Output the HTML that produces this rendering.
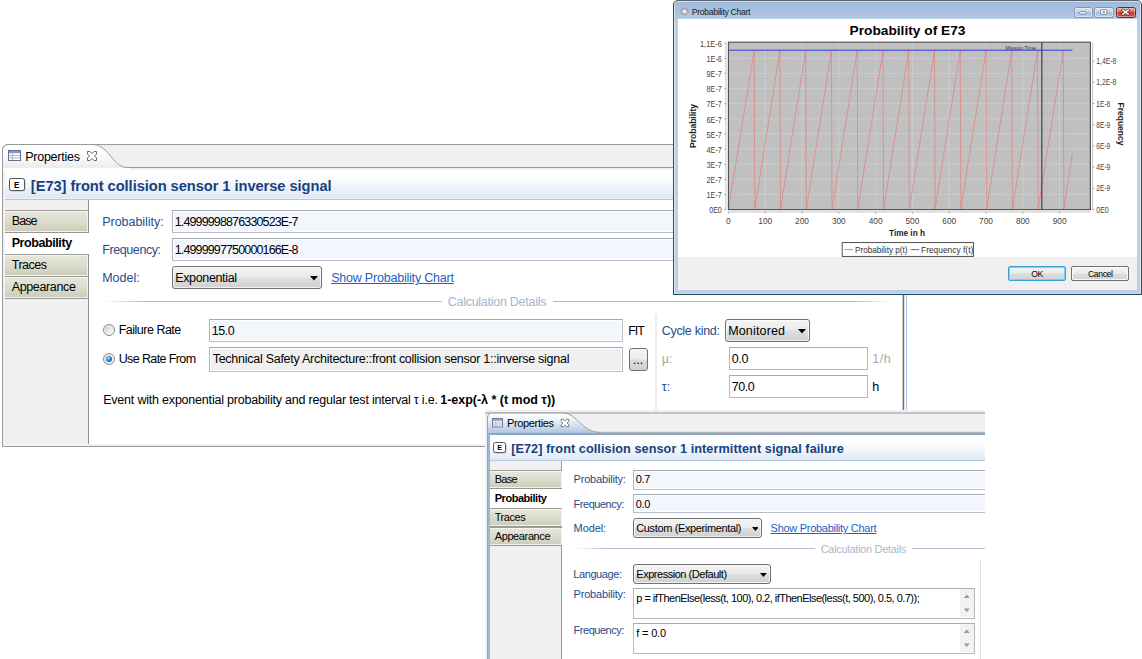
<!DOCTYPE html>
<html><head><meta charset="utf-8"><title>Properties</title>
<style>
html,body{margin:0;padding:0;background:#fff;}
body{width:1142px;height:659px;position:relative;overflow:hidden;font-family:"Liberation Sans",sans-serif;}
div,svg,span.t{position:absolute;}
span.t{white-space:pre;line-height:1;}
#p1,#p2,#cw{left:0;top:0;width:1142px;height:659px;}
#p1{clip-path:polygon(0 0,907px 0,907px 659px,0 659px);}
#p2{clip-path:polygon(485px 410px,985px 410px,985px 659px,485px 659px);}
</style></head><body>
<div id="p1">
<div style="left:2px;top:144px;width:904px;height:303px;background:#f0f0f0;border:1px solid #9a9a9a;border-radius:6px 0 0 0;box-sizing:border-box"></div>
<svg style="left:2px;top:144px" width="904" height="27" viewBox="0 0 904 27">
<defs><linearGradient id="tg1" x1="0" y1="0" x2="0" y2="1"><stop offset="0" stop-color="#fff"/><stop offset="0.35" stop-color="#fdfdfd"/><stop offset="0.86" stop-color="#ececec"/><stop offset="0.9" stop-color="#fff"/></linearGradient></defs>
<path d="M1 27 V6 Q1 1 6 1 H91 C99 0.5 104 7 108.5 12 C113 17 117 23.5 126 23.5 H128 V27 Z" fill="url(#tg1)"/>
<path d="M0.5 27 V6.5 Q0.5 0.5 6.5 0.5 H91 C99 0.5 104 7 108.5 12 C113 17 117 23.5 126 23.5 H904" fill="none" stroke="#9a9a9a" stroke-width="1"/>
<path d="M6 0.5 H904" fill="none" stroke="#9a9a9a" stroke-width="1"/>
</svg>
<svg style="left:8px;top:150px" width="13" height="11" viewBox="0 0 13 11">
<rect x="0.5" y="0.5" width="12" height="10" fill="#fff" stroke="#61708f"/>
<rect x="1" y="1" width="11" height="2.2" fill="#8797bd"/>
<path d="M1 5.5H12M1 7.9H12M4.4 3V10" stroke="#a3aec8" stroke-width="0.9" fill="none"/>
</svg>
<span class="t" style="left:25.19px;top:150.72px;font-size:12.5px;color:#000;letter-spacing:-0.247px;">Properties</span>
<svg style="left:86px;top:150px" width="12" height="12" viewBox="0 0 12 12">
<path d="M1.5 1.5h2.5l2 2 2-2h2.5v2.5l-2 2 2 2v2.5h-2.5l-2-2-2 2h-2.5v-2.5l2-2-2-2z" fill="#fff" stroke="#5a5a5a" stroke-width="0.9"/></svg>
<div style="left:5px;top:170px;width:901px;height:30px;background:linear-gradient(#ffffff 0%,#fcfdff 28%,#e1e8f4 96%,#f4f7fb 100%);border-bottom:1px solid #b0c6e4;box-sizing:border-box"></div>
<div style="left:9px;top:178px;width:16px;height:13px;border:1px solid #555;border-radius:2.5px;background:#fff;box-sizing:border-box;box-shadow:0.5px 0.5px 0 #bbb"></div>
<svg style="left:9px;top:178px" width="16" height="13" viewBox="0 0 16 13"><text x="5.1" y="9.9" font-family="Liberation Sans, sans-serif" font-weight="700" font-size="8.28" textLength="5.4" lengthAdjust="spacingAndGlyphs" fill="#000">E</text></svg>
<span class="t" style="left:30.85px;top:178.88px;font-size:14.67px;color:#17427f;font-weight:700;letter-spacing:-0.051px;">[E73] front collision sensor 1 inverse signal</span>
<div style="left:5px;top:200px;width:901px;height:244px;background:#fff"></div>
<div style="left:3px;top:200px;width:85px;height:245px;background:#f0f0f0"></div>
<div style="left:88px;top:200px;width:1px;height:244px;background:#8f8f8f"></div>
<div style="left:5px;top:210px;width:83px;height:23px;background:linear-gradient(#e7e7db,#dcdccd 50%,#cbcbb9);border-top:1px solid #9c9c9c;border-bottom:1px solid #979797;box-sizing:border-box;box-shadow:inset 0 1px 0 #f6f6ee,inset 0 -1px 0 #f2f2ea,inset -1px 0 0 #f2f2ea"></div>
<span class="t" style="left:11.69px;top:215.02px;font-size:12.5px;color:#000;letter-spacing:-0.898px;">Base</span>
<div style="left:5px;top:233px;width:84px;height:21px;background:#fff"></div>
<span class="t" style="left:11.69px;top:236.52px;font-size:12.5px;color:#000;font-weight:700;letter-spacing:-0.418px;">Probability</span>
<div style="left:5px;top:254px;width:83px;height:23px;background:linear-gradient(#e7e7db,#dcdccd 50%,#cbcbb9);border-top:1px solid #9c9c9c;border-bottom:1px solid #979797;box-sizing:border-box;box-shadow:inset 0 1px 0 #f6f6ee,inset 0 -1px 0 #f2f2ea,inset -1px 0 0 #f2f2ea"></div>
<span class="t" style="left:11.69px;top:258.92px;font-size:12.5px;color:#000;letter-spacing:-0.473px;">Traces</span>
<div style="left:5px;top:276px;width:83px;height:23px;background:linear-gradient(#e7e7db,#dcdccd 50%,#cbcbb9);border-top:1px solid #9c9c9c;border-bottom:1px solid #979797;box-sizing:border-box;box-shadow:inset 0 1px 0 #f6f6ee,inset 0 -1px 0 #f2f2ea,inset -1px 0 0 #f2f2ea"></div>
<span class="t" style="left:11.69px;top:281.02px;font-size:12.5px;color:#000;letter-spacing:-0.361px;">Appearance</span>
<div style="left:172px;top:210px;width:740px;height:23px;background:#f3f7fd;border:1px solid #b9bec8;border-top-color:#a3a8b2;border-left-color:#aeb3bd;box-sizing:border-box;box-shadow:inset 0 0 0 1px #fff"></div>
<span class="t" style="left:174.69px;top:216.22px;font-size:12.5px;color:#000;letter-spacing:-0.862px;">1.4999998876330523E-7</span>
<div style="left:172px;top:238px;width:740px;height:23px;background:#f3f7fd;border:1px solid #b9bec8;border-top-color:#a3a8b2;border-left-color:#aeb3bd;box-sizing:border-box;box-shadow:inset 0 0 0 1px #fff"></div>
<span class="t" style="left:174.69px;top:244.22px;font-size:12.5px;color:#000;letter-spacing:-0.862px;">1.4999997750000166E-8</span>
<span class="t" style="left:102.19px;top:216.22px;font-size:12.5px;color:#1f4b8c;letter-spacing:-0.028px;">Probability:</span>
<span class="t" style="left:102.19px;top:244.22px;font-size:12.5px;color:#1f4b8c;letter-spacing:-0.403px;">Frequency:</span>
<span class="t" style="left:102.19px;top:272.22px;font-size:12.5px;color:#1f4b8c;letter-spacing:-0.003px;">Model:</span>
<div style="left:172px;top:266px;width:150px;height:23px;border:1px solid #707070;border-radius:3px;background:linear-gradient(#f3f3f3,#ebebeb 48%,#dedede 52%,#d0d0d0);box-sizing:border-box;box-shadow:inset 0 0 0 1px rgba(255,255,255,.7)"></div>
<span class="t" style="left:175.19px;top:272.22px;font-size:12.5px;color:#000;letter-spacing:-0.348px;">Exponential</span>
<svg style="left:309.5px;top:276px" width="8" height="5" viewBox="0 0 8 5"><path d="M0 0H8L4 4.6Z" fill="#000"/></svg>
<span class="t" style="left:331.19px;top:272.22px;font-size:12.5px;color:#1a5fc4;letter-spacing:-0.211px;text-decoration:underline;">Show Probability Chart</span>
<div style="left:104px;top:301px;width:338px;height:1px;background:linear-gradient(90deg,#fff,#a9bad2 12%,#a9bad2)"></div>
<div style="left:553px;top:301px;width:340px;height:1px;background:linear-gradient(90deg,#a9bad2,#a9bad2 88%,#fff)"></div>
<span class="t" style="left:447.69px;top:295.72px;font-size:12.5px;color:#a3b6cc;letter-spacing:-0.264px;">Calculation Details</span>
<div style="left:103px;top:324px;width:12px;height:12px;border:1px solid #8a8b8c;border-radius:50%;background:linear-gradient(135deg,#c6c9cc 10%,#e9eaeb 50%,#fdfdfd 85%);box-sizing:border-box;box-shadow:inset 0 0 0 1.2px #eeeeee"></div>
<span class="t" style="left:118.69px;top:324.22px;font-size:12.5px;color:#000;letter-spacing:-0.499px;">Failure Rate</span>
<div style="left:209px;top:319px;width:414px;height:23px;background:#f3f7fd;border:1px solid #b9bec8;border-top-color:#a3a8b2;border-left-color:#aeb3bd;box-sizing:border-box;box-shadow:inset 0 0 0 1px #fff"></div>
<span class="t" style="left:211.79px;top:325.22px;font-size:12.5px;color:#000;letter-spacing:-0.457px;">15.0</span>
<span class="t" style="left:628.19px;top:324.72px;font-size:12.5px;color:#000;letter-spacing:-1.081px;">FIT</span>
<div style="left:103px;top:353px;width:12px;height:12px;border:1px solid #8a8b8c;border-radius:50%;background:linear-gradient(135deg,#c6c9cc 10%,#e9eaeb 50%,#fdfdfd 85%);box-sizing:border-box;box-shadow:inset 0 0 0 1.2px #eeeeee"><i style="position:absolute;left:2px;top:2px;width:6px;height:6px;border-radius:50%;background:radial-gradient(circle at 38% 35%,#9fe4fb 0%,#38a1dc 35%,#145aa6 70%,#0b3a78 100%)"></i></div>
<span class="t" style="left:118.69px;top:352.82px;font-size:12.5px;color:#000;letter-spacing:-0.611px;">Use Rate From</span>
<div style="left:209px;top:347px;width:414px;height:25px;background:#f0f0f0;border:1px solid #b9bec8;border-top-color:#a3a8b2;border-left-color:#aeb3bd;box-sizing:border-box;box-shadow:inset 0 0 0 1px #fff"></div>
<span class="t" style="left:212.69px;top:352.82px;font-size:12.5px;color:#000;letter-spacing:-0.263px;">Technical Safety Architecture::front collision sensor 1::inverse signal</span>
<div style="left:629px;top:348px;width:19px;height:23px;border:1px solid #707070;border-radius:3px;background:linear-gradient(#f4f4f4,#ececec 48%,#dddddd 52%,#cfcfcf);box-sizing:border-box"></div>
<span class="t" style="left:632.69px;top:353.82px;font-size:12.5px;color:#000;letter-spacing:0.027px;">...</span>
<span class="t" style="left:103.19px;top:394.22px;font-size:12.5px;color:#000;letter-spacing:-0.204px;">Event with exponential probability and regular test interval τ i.e.</span>
<span class="t" style="left:440.19px;top:394.22px;font-size:12.5px;color:#000;font-weight:700;letter-spacing:-0.014px;">1-exp(-λ * (t mod τ))</span>
<div style="left:654.5px;top:314px;width:2.3px;height:131px;background:#ececec"></div>
<span class="t" style="left:661.69px;top:324.72px;font-size:12.5px;color:#1f4b8c;letter-spacing:-0.285px;">Cycle kind:</span>
<div style="left:725px;top:319px;width:85px;height:23px;border:1px solid #707070;border-radius:3px;background:linear-gradient(#f3f3f3,#ebebeb 48%,#dedede 52%,#d0d0d0);box-sizing:border-box;box-shadow:inset 0 0 0 1px rgba(255,255,255,.7)"></div>
<span class="t" style="left:728.19px;top:324.72px;font-size:12.5px;color:#000;letter-spacing:0.157px;">Monitored</span>
<svg style="left:797.5px;top:329px" width="8" height="5" viewBox="0 0 8 5"><path d="M0 0H8L4 4.6Z" fill="#000"/></svg>
<span class="t" style="left:661.69px;top:353.22px;font-size:12.5px;color:#a8a8a8;">μ:</span>
<div style="left:729px;top:347px;width:139px;height:23px;background:#fff;border:1px solid #b6b8bd;border-top-color:#a9abb1;box-sizing:border-box;box-shadow:inset 0 0 0 1px #fff"></div>
<span class="t" style="left:731.69px;top:352.72px;font-size:12.5px;color:#000;letter-spacing:-0.292px;">0.0</span>
<span class="t" style="left:872.19px;top:353.22px;font-size:12.5px;color:#a8a8a8;letter-spacing:0.541px;">1/h</span>
<span class="t" style="left:661.69px;top:380.72px;font-size:12.5px;color:#1f4b8c;">τ:</span>
<div style="left:729px;top:375px;width:139px;height:23px;background:#fff;border:1px solid #b6b8bd;border-top-color:#a9abb1;box-sizing:border-box;box-shadow:inset 0 0 0 1px #fff"></div>
<span class="t" style="left:731.69px;top:380.72px;font-size:12.5px;color:#000;letter-spacing:-0.457px;">70.0</span>
<span class="t" style="left:872.19px;top:380.72px;font-size:12.5px;color:#000;">h</span>
<div style="left:902px;top:200px;width:1px;height:246px;background:#cfcfcf"></div>
<div style="left:903px;top:200px;width:1px;height:246px;background:#6e6e6e"></div>
<div style="left:904px;top:200px;width:1px;height:246px;background:#e4e4e4"></div>
<div style="left:906px;top:200px;width:1px;height:246px;background:#a9c4e6"></div>
</div>
<div id="p2">
<div style="left:485px;top:410px;width:500px;height:260px;background:#f0f0f0"></div>
<div style="left:485px;top:412px;width:500px;height:2px;background:#c3c3c3"></div>
<svg style="left:485px;top:410px" width="500" height="26" viewBox="0 0 500 26">
<defs><linearGradient id="tg" x1="0" y1="0" x2="0" y2="1"><stop offset="0" stop-color="#ffffff"/><stop offset="0.25" stop-color="#f1f5fa"/><stop offset="1" stop-color="#a3bddc"/></linearGradient></defs>
<path d="M2.5 26 V8 Q2.5 3 7.5 3 H78 C93 3 96 22.5 115 22.5 H500 V26 Z" fill="url(#tg)"/>
<path d="M2.5 26 V8 Q2.5 3 7.5 3 H78 C93 3 96 22.5 115 22.5" fill="none" stroke="#9c9c9c" stroke-width="1"/>
<path d="M113 22.3 H500" stroke="#b0aca6" stroke-width="1"/>
<path d="M3 24 H500" stroke="#86a5cf" stroke-width="2"/>
</svg>
<div style="left:488px;top:434px;width:2px;height:236px;background:#9db7d8"></div>
<div style="left:487px;top:420px;width:1px;height:250px;background:#a0a0a0"></div>
<svg style="left:492px;top:418px" width="11" height="10" viewBox="0 0 11 10">
<rect x="0.5" y="0.5" width="10" height="8.5" fill="#f4f6fb" stroke="#6f7d98"/>
<rect x="1" y="1" width="9" height="2" fill="#9aabc9"/>
<path d="M1 5H10M1 7H10M3.8 3V9" stroke="#aab4ca" stroke-width="0.8" fill="none"/></svg>
<span class="t" style="left:506.89px;top:417.99px;font-size:11px;color:#000;letter-spacing:-0.331px;">Properties</span>
<svg style="left:559.5px;top:418.3px" width="10" height="10" viewBox="0 0 12 12">
<path d="M1.5 1.5h2.5l2 2 2-2h2.5v2.5l-2 2 2 2v2.5h-2.5l-2-2-2 2h-2.5v-2.5l2-2-2-2z" fill="#fff" stroke="#666" stroke-width="1"/></svg>
<div style="left:490px;top:435px;width:495px;height:25.5px;background:linear-gradient(#ffffff 0%,#fcfdff 35%,#e0e8f4 100%);border-bottom:1px solid #b4c9e4;box-sizing:border-box"></div>
<div style="left:492.7px;top:442px;width:13.8px;height:11px;border:1px solid #555;border-radius:2.5px;background:#fff;box-sizing:border-box;box-shadow:0.5px 0.5px 0 #bbb"></div>
<svg style="left:492.7px;top:442px" width="13.8" height="11" viewBox="0 0 13.8 11"><text x="4.36" y="7.9" font-family="Liberation Sans, sans-serif" font-weight="700" font-size="7.176" textLength="4.68" lengthAdjust="spacingAndGlyphs" fill="#000">E</text></svg>
<span class="t" style="left:511.17px;top:442.85px;font-size:12.7px;color:#17427f;font-weight:700;letter-spacing:0.060px;">[E72] front collision sensor 1 intermittent signal failure</span>
<div style="left:490px;top:460.5px;width:495px;height:200px;background:#fff"></div>
<div style="left:490px;top:460.5px;width:71.5px;height:200px;background:#f0f0f0"></div>
<div style="left:561.3px;top:460.5px;width:1px;height:200px;background:#9a9a9a"></div>
<div style="left:490px;top:470px;width:71.5px;height:19px;background:linear-gradient(#e7e7db,#dcdccd 50%,#cbcbb9);border-top:1px solid #9c9c9c;border-bottom:1px solid #979797;box-sizing:border-box;box-shadow:inset 0 1px 0 #f6f6ee,inset 0 -1px 0 #f2f2ea,inset -1px 0 0 #f2f2ea"></div>
<span class="t" style="left:494.69px;top:474.09px;font-size:11px;color:#000;letter-spacing:-0.738px;">Base</span>
<div style="left:490px;top:489px;width:72.5px;height:19px;background:#fff"></div>
<span class="t" style="left:494.69px;top:492.79px;font-size:11px;color:#000;font-weight:700;letter-spacing:-0.457px;">Probability</span>
<div style="left:490px;top:508px;width:71.5px;height:19px;background:linear-gradient(#e7e7db,#dcdccd 50%,#cbcbb9);border-top:1px solid #9c9c9c;border-bottom:1px solid #979797;box-sizing:border-box;box-shadow:inset 0 1px 0 #f6f6ee,inset 0 -1px 0 #f2f2ea,inset -1px 0 0 #f2f2ea"></div>
<span class="t" style="left:494.69px;top:511.69px;font-size:11px;color:#000;letter-spacing:-0.432px;">Traces</span>
<div style="left:490px;top:527px;width:71.5px;height:19px;background:linear-gradient(#e7e7db,#dcdccd 50%,#cbcbb9);border-top:1px solid #9c9c9c;border-bottom:1px solid #979797;box-sizing:border-box;box-shadow:inset 0 1px 0 #f6f6ee,inset 0 -1px 0 #f2f2ea,inset -1px 0 0 #f2f2ea"></div>
<span class="t" style="left:494.69px;top:530.69px;font-size:11px;color:#000;letter-spacing:-0.380px;">Appearance</span>
<div style="left:633px;top:469.5px;width:360px;height:20px;background:#f3f7fd;border:1px solid #b9bec8;border-top-color:#a3a8b2;border-left-color:#aeb3bd;box-sizing:border-box;box-shadow:inset 0 0 0 1px #fff"></div>
<span class="t" style="left:635.78px;top:474.49px;font-size:11px;color:#000;letter-spacing:-0.324px;">0.7</span>
<div style="left:633px;top:494.2px;width:360px;height:19.3px;background:#f3f7fd;border:1px solid #b9bec8;border-top-color:#a3a8b2;border-left-color:#aeb3bd;box-sizing:border-box;box-shadow:inset 0 0 0 1px #fff"></div>
<span class="t" style="left:635.78px;top:498.79px;font-size:11px;color:#000;letter-spacing:-0.324px;">0.0</span>
<span class="t" style="left:573.58px;top:474.49px;font-size:11px;color:#1f4b8c;letter-spacing:-0.191px;">Probability:</span>
<span class="t" style="left:573.58px;top:498.89px;font-size:11px;color:#1f4b8c;letter-spacing:-0.471px;">Frequency:</span>
<span class="t" style="left:573.58px;top:522.79px;font-size:11px;color:#1f4b8c;letter-spacing:-0.099px;">Model:</span>
<div style="left:633px;top:518.3px;width:129.3px;height:19.3px;border:1px solid #707070;border-radius:3px;background:linear-gradient(#f3f3f3,#ebebeb 48%,#dedede 52%,#d0d0d0);box-sizing:border-box;box-shadow:inset 0 0 0 1px rgba(255,255,255,.7)"></div>
<span class="t" style="left:636.28px;top:523.49px;font-size:11px;color:#000;letter-spacing:-0.365px;">Custom (Experimental)</span>
<svg style="left:751.675px;top:526.675px" width="6.8" height="4.25" viewBox="0 0 8 5"><path d="M0 0H8L4 4.6Z" fill="#000"/></svg>
<span class="t" style="left:770.58px;top:523.49px;font-size:11px;color:#1a5fc4;letter-spacing:-0.280px;text-decoration:underline;">Show Probability Chart</span>
<div style="left:575px;top:548.3px;width:240px;height:1px;background:linear-gradient(90deg,#fff,#b3c2d6 12%,#b3c2d6)"></div>
<div style="left:912px;top:548.3px;width:73px;height:1px;background:#b3c2d6"></div>
<span class="t" style="left:820.68px;top:543.99px;font-size:11px;color:#a9bacd;letter-spacing:-0.304px;">Calculation Details</span>
<span class="t" style="left:573.28px;top:569.09px;font-size:11px;color:#1f4b8c;letter-spacing:-0.409px;">Language:</span>
<div style="left:633px;top:564px;width:138px;height:19.6px;border:1px solid #707070;border-radius:3px;background:linear-gradient(#f3f3f3,#ebebeb 48%,#dedede 52%,#d0d0d0);box-sizing:border-box;box-shadow:inset 0 0 0 1px rgba(255,255,255,.7)"></div>
<span class="t" style="left:636.28px;top:569.09px;font-size:11px;color:#000;letter-spacing:-0.467px;">Expression (Default)</span>
<svg style="left:760.375px;top:572.525px" width="6.8" height="4.25" viewBox="0 0 8 5"><path d="M0 0H8L4 4.6Z" fill="#000"/></svg>
<span class="t" style="left:573.58px;top:589.49px;font-size:11px;color:#1f4b8c;letter-spacing:-0.191px;">Probability:</span>
<div style="left:633px;top:588.4px;width:342px;height:30.6px;background:#fff;border:1px solid #b6b8bd;border-top-color:#a9abb1;box-sizing:border-box;box-shadow:inset 0 0 0 1px #fff"></div>
<span class="t" style="left:636.28px;top:593.49px;font-size:11px;color:#000;letter-spacing:-0.522px;">p = ifThenElse(less(t, 100), 0.2, ifThenElse(less(t, 500), 0.5, 0.7));</span>
<div style="left:960.4px;top:589.4px;width:13.6px;height:28px;background:#f2f2f2"></div>
<svg style="left:960.4px;top:589.4px" width="13.6" height="28" viewBox="0 0 13.6 28"><path d="M3.8 9 l3 -3.4 l3 3.4z M3.8 19.5 l3 3.4 l3 -3.4z" fill="#9a9a9a"/></svg>
<span class="t" style="left:573.58px;top:624.69px;font-size:11px;color:#1f4b8c;letter-spacing:-0.471px;">Frequency:</span>
<div style="left:633px;top:623.4px;width:342px;height:30.4px;background:#fff;border:1px solid #b6b8bd;border-top-color:#a9abb1;box-sizing:border-box;box-shadow:inset 0 0 0 1px #fff"></div>
<span class="t" style="left:636.28px;top:627.89px;font-size:11px;color:#000;letter-spacing:-0.181px;">f = 0.0</span>
<div style="left:960.4px;top:624.4px;width:13.6px;height:28px;background:#f2f2f2"></div>
<svg style="left:960.4px;top:624.4px" width="13.6" height="28" viewBox="0 0 13.6 28"><path d="M3.8 9 l3 -3.4 l3 3.4z M3.8 19.5 l3 3.4 l3 -3.4z" fill="#9a9a9a"/></svg>
<div style="left:980px;top:559.5px;width:1.3px;height:110px;background:#e2e2e2"></div>
</div>
<div id="cw">
<div style="left:673px;top:0px;width:469px;height:295px;box-sizing:border-box;border:1px solid #3f454c;border-top-color:#5d646d;border-bottom-color:#1d4a55;border-radius:5px 5px 0 0;background:linear-gradient(#9ab6d8 0px,#a3bedd 5px,#a9c2e0 11px,#b7cde8 19px,#bad0ea 40px,#b9cfea 100%);box-shadow:inset 0 0 0 1px rgba(255,255,255,.55)"></div>
<div style="left:674px;top:293px;width:467px;height:1px;background:#aee6fa"></div>
<div style="left:678px;top:19px;width:459px;height:237.5px;background:#fff"></div>
<div style="left:678px;top:256.5px;width:459px;height:33.5px;background:#f0f0f0"></div>
<svg style="left:680px;top:7px" width="9" height="9" viewBox="0 0 9 9"><circle cx="4.5" cy="4.5" r="3.1" fill="none" stroke="#9a9a9a" stroke-width="2" stroke-dasharray="1.4 1.03"/><circle cx="4.5" cy="4.5" r="2.6" fill="#dedede" stroke="#a4a4a4" stroke-width="0.8"/><circle cx="4.5" cy="4.5" r="1" fill="#fff"/></svg>
<span class="t" style="left:691.83px;top:7.74px;font-size:8.7px;color:#1a1a1a;letter-spacing:-0.357px;">Probability Chart</span>
<div style="left:1073.5px;top:6.5px;width:19px;height:11px;box-sizing:border-box;border:1px solid #8094ae;border-radius:2.5px;background:linear-gradient(#d3dff0,#c3d3e8 45%,#abc1de 50%,#b9cde6);box-shadow:inset 0 0 0 1px rgba(255,255,255,.5)"></div>
<div style="left:1094px;top:6.5px;width:20px;height:11px;box-sizing:border-box;border:1px solid #8094ae;border-radius:2.5px;background:linear-gradient(#d3dff0,#c3d3e8 45%,#abc1de 50%,#b9cde6);box-shadow:inset 0 0 0 1px rgba(255,255,255,.5)"></div>
<div style="left:1115.5px;top:6.5px;width:20.5px;height:11px;box-sizing:border-box;border:1px solid #6b2a28;border-radius:2.5px;background:linear-gradient(#e5a79a,#d56d5e 45%,#c03a2c 50%,#d0604b);box-shadow:inset 0 0 0 1px rgba(255,255,255,.35)"></div>
<svg style="left:1073px;top:6px" width="64" height="12" viewBox="0 0 64 12"><rect x="6.5" y="5.6" width="6.4" height="2.4" rx="1" fill="#fff" stroke="#5b6675" stroke-width="0.7"/><rect x="27.6" y="3.6" width="6.2" height="4.6" rx="1" fill="#fff" stroke="#5b6675" stroke-width="0.7"/><rect x="29.6" y="5.3" width="2.3" height="1.3" fill="#5b6675"/><path d="M49.9 4.2 L55.1 8.2 M55.1 4.2 L49.9 8.2" stroke="#5a2320" stroke-width="2.9" stroke-linecap="square"/><path d="M49.9 4.2 L55.1 8.2 M55.1 4.2 L49.9 8.2" stroke="#fff" stroke-width="1.6" stroke-linecap="square"/></svg>
<svg style="left:0;top:0" width="1142" height="300" viewBox="0 0 1142 300" font-family="Liberation Sans, sans-serif">
<rect x="728.4" y="42.2" width="362" height="167.4" fill="#c0c0c0"/>
<path d="M765.20 42.2 V209.6 M802.00 42.2 V209.6 M838.80 42.2 V209.6 M875.60 42.2 V209.6 M912.40 42.2 V209.6 M949.20 42.2 V209.6 M986.00 42.2 V209.6 M1022.80 42.2 V209.6 M1059.60 42.2 V209.6 M728.4 194.47 H1090.4 M728.4 179.34 H1090.4 M728.4 164.21 H1090.4 M728.4 149.08 H1090.4 M728.4 133.95 H1090.4 M728.4 118.82 H1090.4 M728.4 103.69 H1090.4 M728.4 88.56 H1090.4 M728.4 73.43 H1090.4 M728.4 58.30 H1090.4" stroke="#fff" stroke-opacity="0.62" stroke-width="0.6" stroke-dasharray="1.3 1.3" fill="none"/>
<polyline points="728.40,209.60 754.16,50.73 754.75,209.30 779.92,50.73 780.51,209.30 805.68,50.73 806.27,209.30 831.44,50.73 832.03,209.30 857.20,50.73 857.79,209.30 882.96,50.73 883.55,209.30 908.72,50.73 909.31,209.30 934.48,50.73 935.07,209.30 960.24,50.73 960.83,209.30 986.00,50.73 986.59,209.30 1011.76,50.73 1012.35,209.30 1037.52,50.73 1038.11,209.30 1063.28,50.73 1063.87,209.30 1072.48,152.86" fill="none" stroke="#f06a6a" stroke-opacity="0.8" stroke-width="0.7" stroke-linejoin="round"/>
<path d="M728.4 50.20 H1072.48" stroke="#6262dc" stroke-width="1.6" fill="none"/>
<path d="M1041.80 42.2 V209.6" stroke="#4a4a4a" stroke-width="1.3" fill="none"/>
<text x="1036" y="50" font-size="6" text-anchor="end" fill="#333" textLength="30.4" lengthAdjust="spacingAndGlyphs">Mission Time</text>
<rect x="728.4" y="42.2" width="362" height="167.4" fill="none" stroke="#4d4d4d" stroke-width="1.1"/>
<path d="M725.9 42.2 V209.6 M1092.7 42.2 V209.6 M728.4 211.9 H1090.4" stroke="#b8b8b8" stroke-width="0.8" fill="none"/>
<text x="709.20" y="213.40" font-size="8.3" fill="#444" textLength="12.6" lengthAdjust="spacingAndGlyphs">0E0</text>
<text x="706.60" y="198.27" font-size="8.3" fill="#444" textLength="15.2" lengthAdjust="spacingAndGlyphs">1E-7</text>
<text x="706.60" y="183.14" font-size="8.3" fill="#444" textLength="15.2" lengthAdjust="spacingAndGlyphs">2E-7</text>
<text x="706.60" y="168.01" font-size="8.3" fill="#444" textLength="15.2" lengthAdjust="spacingAndGlyphs">3E-7</text>
<text x="706.60" y="152.88" font-size="8.3" fill="#444" textLength="15.2" lengthAdjust="spacingAndGlyphs">4E-7</text>
<text x="706.60" y="137.75" font-size="8.3" fill="#444" textLength="15.2" lengthAdjust="spacingAndGlyphs">5E-7</text>
<text x="706.60" y="122.62" font-size="8.3" fill="#444" textLength="15.2" lengthAdjust="spacingAndGlyphs">6E-7</text>
<text x="706.60" y="107.49" font-size="8.3" fill="#444" textLength="15.2" lengthAdjust="spacingAndGlyphs">7E-7</text>
<text x="706.60" y="92.36" font-size="8.3" fill="#444" textLength="15.2" lengthAdjust="spacingAndGlyphs">8E-7</text>
<text x="706.60" y="77.23" font-size="8.3" fill="#444" textLength="15.2" lengthAdjust="spacingAndGlyphs">9E-7</text>
<text x="706.60" y="62.10" font-size="8.3" fill="#444" textLength="15.2" lengthAdjust="spacingAndGlyphs">1E-6</text>
<text x="700.00" y="46.97" font-size="8.3" fill="#444" textLength="21.8" lengthAdjust="spacingAndGlyphs">1,1E-6</text>
<text x="1096.3" y="212.60" font-size="8.3" fill="#444" textLength="12.4" lengthAdjust="spacingAndGlyphs">0E0</text>
<text x="1096.3" y="191.40" font-size="8.3" fill="#444" textLength="14" lengthAdjust="spacingAndGlyphs">2E-9</text>
<text x="1096.3" y="170.20" font-size="8.3" fill="#444" textLength="14" lengthAdjust="spacingAndGlyphs">4E-9</text>
<text x="1096.3" y="149.00" font-size="8.3" fill="#444" textLength="14" lengthAdjust="spacingAndGlyphs">6E-9</text>
<text x="1096.3" y="127.80" font-size="8.3" fill="#444" textLength="14" lengthAdjust="spacingAndGlyphs">8E-9</text>
<text x="1096.3" y="106.60" font-size="8.3" fill="#444" textLength="14" lengthAdjust="spacingAndGlyphs">1E-8</text>
<text x="1096.3" y="85.40" font-size="8.3" fill="#444" textLength="20" lengthAdjust="spacingAndGlyphs">1,2E-8</text>
<text x="1096.3" y="64.20" font-size="8.3" fill="#444" textLength="20" lengthAdjust="spacingAndGlyphs">1,4E-8</text>
<text x="728.40" y="224.2" font-size="8.3" text-anchor="middle" fill="#444">0</text>
<text x="765.20" y="224.2" font-size="8.3" text-anchor="middle" fill="#444">100</text>
<text x="802.00" y="224.2" font-size="8.3" text-anchor="middle" fill="#444">200</text>
<text x="838.80" y="224.2" font-size="8.3" text-anchor="middle" fill="#444">300</text>
<text x="875.60" y="224.2" font-size="8.3" text-anchor="middle" fill="#444">400</text>
<text x="912.40" y="224.2" font-size="8.3" text-anchor="middle" fill="#444">500</text>
<text x="949.20" y="224.2" font-size="8.3" text-anchor="middle" fill="#444">600</text>
<text x="986.00" y="224.2" font-size="8.3" text-anchor="middle" fill="#444">700</text>
<text x="1022.80" y="224.2" font-size="8.3" text-anchor="middle" fill="#444">800</text>
<text x="1059.60" y="224.2" font-size="8.3" text-anchor="middle" fill="#444">900</text>
<path d="M724.3 209.60 H725.9 M724.3 194.47 H725.9 M724.3 179.34 H725.9 M724.3 164.21 H725.9 M724.3 149.08 H725.9 M724.3 133.95 H725.9 M724.3 118.82 H725.9 M724.3 103.69 H725.9 M724.3 88.56 H725.9 M724.3 73.43 H725.9 M724.3 58.30 H725.9 M724.3 43.17 H725.9 M1092.7 209.60 H1094.3 M1092.7 188.40 H1094.3 M1092.7 167.20 H1094.3 M1092.7 146.00 H1094.3 M1092.7 124.80 H1094.3 M1092.7 103.60 H1094.3 M1092.7 82.40 H1094.3 M1092.7 61.20 H1094.3 M728.40 211.9 V213.5 M765.20 211.9 V213.5 M802.00 211.9 V213.5 M838.80 211.9 V213.5 M875.60 211.9 V213.5 M912.40 211.9 V213.5 M949.20 211.9 V213.5 M986.00 211.9 V213.5 M1022.80 211.9 V213.5 M1059.60 211.9 V213.5" stroke="#888" stroke-width="0.8" fill="none"/>
<text x="907.5" y="35.3" font-size="13.6" font-weight="700" text-anchor="middle" fill="#000" textLength="116" lengthAdjust="spacingAndGlyphs">Probability of E73</text>
<text x="907" y="235.8" font-size="9" font-weight="700" text-anchor="middle" fill="#222" textLength="36" lengthAdjust="spacingAndGlyphs">Time in h</text>
<text transform="translate(696.3 126) rotate(-90)" font-size="9" font-weight="700" text-anchor="middle" fill="#222" textLength="44" lengthAdjust="spacingAndGlyphs">Probability</text>
<text transform="translate(1117.6 124) rotate(90)" font-size="9" font-weight="700" text-anchor="middle" fill="#222" textLength="43" lengthAdjust="spacingAndGlyphs">Frequency</text>
<rect x="842.2" y="242.6" width="131.2" height="13.8" fill="#fff" stroke="#3c3c3c" stroke-width="0.9"/>
<path d="M844.5 249.6H853" stroke="#f06a6a" stroke-width="0.9"/>
<path d="M910.7 249.6H919.2" stroke="#4a4ae8" stroke-width="0.9"/>
<text x="855" y="252.9" font-size="8.4" fill="#333" textLength="52.5" lengthAdjust="spacingAndGlyphs">Probability p(t)</text>
<text x="921" y="252.9" font-size="8.4" fill="#333" textLength="52.3" lengthAdjust="spacingAndGlyphs">Frequency f(t)</text>
</svg>
<div style="left:1008px;top:266px;width:57.8px;height:15px;box-sizing:border-box;border:1px solid #3a9fd6;border-radius:2px;background:linear-gradient(#f3f3f3,#ebebeb 48%,#dddddd 52%,#d2d2d2);box-shadow:inset 0 0 0 1px #7ad4f2"></div>
<span class="t" style="left:1031.14px;top:269.92px;font-size:8.6px;color:#000;letter-spacing:-0.397px;">OK</span>
<div style="left:1071px;top:266px;width:58px;height:15px;box-sizing:border-box;border:1px solid #707070;border-radius:2px;background:linear-gradient(#f4f4f4,#ececec 48%,#dedede 52%,#d1d1d1);box-shadow:inset 0 0 0 1px rgba(255,255,255,.8)"></div>
<span class="t" style="left:1088.04px;top:269.92px;font-size:8.6px;color:#000;letter-spacing:-0.390px;">Cancel</span>
</div>
</body></html>
